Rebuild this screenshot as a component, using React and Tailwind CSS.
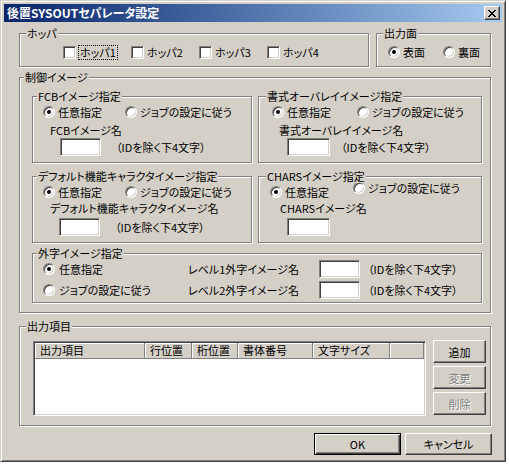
import React from 'react';

const face = "font-['Noto_Sans_CJK_JP','Noto_Sans',sans-serif] [font-feature-settings:'palt']";

// etched group box with the caption sitting on the top line
function Group({ label, labelLeft = 'left-[5px]', className = '', children }) {
    return (
        <div className={`relative border border-[#808080] shadow-[inset_1px_1px_0_#fff,1px_1px_0_#fff] ${className}`}>
            <span className={`absolute -top-[8px] ${labelLeft} bg-[#d4d0c8] px-[1px] leading-[14px]`}>{label}</span>
            {children}
        </div>
    );
}

function Sunken({ className = '', children }) {
    return (
        <div
            className={`border border-t-[#808080] border-l-[#808080] border-r-white border-b-white bg-white shadow-[inset_1px_1px_0_#404040,inset_-1px_-1px_0_#d4d0c8] ${className}`}
        >
            {children}
        </div>
    );
}

function Check() {
    return (
        <span className="block w-[13px] h-[13px] shrink-0 border border-t-[#808080] border-l-[#808080] border-r-white border-b-white bg-white shadow-[inset_1px_1px_0_#404040,inset_-1px_-1px_0_#d4d0c8]" />
    );
}

function Radio({ checked }) {
    return (
        <span className="flex w-[12px] h-[12px] shrink-0 items-center justify-center rounded-full border border-t-[#808080] border-l-[#808080] border-r-white border-b-white bg-white shadow-[inset_1px_1px_0_#404040,inset_-1px_-1px_0_#d4d0c8]">
            {checked && <span className="block w-[4px] h-[4px] rounded-full bg-black" />}
        </span>
    );
}

function Opt({ checked, className = '', children }) {
    return (
        <div className={`flex h-[14px] items-center ${className}`}>
            <Radio checked={checked} />
            <span className="ml-[3px] whitespace-nowrap leading-[14px]">{children}</span>
        </div>
    );
}

function Button({ children, disabled, isDefault, className = '' }) {
    const frame = isDefault
        ? 'border border-black shadow-[inset_1px_1px_0_#fff,inset_-1px_-1px_0_#404040,inset_-2px_-2px_0_#808080]'
        : 'border border-t-white border-l-white border-r-[#404040] border-b-[#404040] shadow-[inset_-1px_-1px_0_#808080]';
    return (
        <div
            className={`flex items-center justify-center bg-[#d4d0c8] leading-[14px] ${frame} ${
                disabled ? 'text-[#808080] [text-shadow:1px_1px_0_#fff]' : 'text-black'
            } ${className}`}
        >
            {children}
        </div>
    );
}

function CloseGlyph() {
    const px = [
        [0, 0], [1, 0], [6, 0], [7, 0],
        [1, 1], [2, 1], [5, 1], [6, 1],
        [2, 2], [3, 2], [4, 2], [5, 2],
        [3, 3], [4, 3],
        [2, 4], [3, 4], [4, 4], [5, 4],
        [1, 5], [2, 5], [5, 5], [6, 5],
        [0, 6], [1, 6], [6, 6], [7, 6],
    ];
    return (
        <svg width="8" height="7" viewBox="0 0 8 7" shapeRendering="crispEdges">
            {px.map(([x, y]) => (
                <rect key={`${x}-${y}`} x={x} y={y} width="1" height="1" fill="#000" />
            ))}
        </svg>
    );
}

const columns = [
    { label: '出力項目', w: 'w-[110px]' },
    { label: '行位置', w: 'w-[47px]' },
    { label: '桁位置', w: 'w-[46px]' },
    { label: '書体番号', w: 'w-[75px]' },
    { label: '文字サイズ', w: 'w-[77px]' },
    { label: '', w: 'flex-1' },
];

export default function App() {
    return (
        <div className={`min-h-screen bg-white text-[11px] text-black ${face}`}>
            <div className="w-[506px] h-[462px] bg-[#d4d0c8] border border-t-[#d4d0c8] border-l-[#d4d0c8] border-r-[#404040] border-b-[#404040] shadow-[inset_1px_1px_0_#fff,inset_-1px_-1px_0_#808080] p-[3px]">
                {/* title bar */}
                <div className="flex h-[18px] items-center justify-between bg-linear-to-r from-[#0a246a] to-[#a6caf0] pl-[3px] pr-[2px]">
                    <span className="text-[12px] font-bold text-white leading-[14px]">後置SYSOUTセパレータ設定</span>
                    <span className="flex w-[16px] h-[14px] items-center justify-center bg-[#d4d0c8] border border-t-white border-l-white border-r-[#404040] border-b-[#404040] shadow-[inset_-1px_-1px_0_#808080]">
                        <CloseGlyph />
                    </span>
                </div>

                <div className="pl-[15px]">
                    {/* hopper / output side */}
                    <div className="mt-[11px] flex gap-[7px]">
                        <Group label="ホッパ" labelLeft="left-[6px]" className="w-[350px] h-[34px]">
                            <div className="mt-[11px] flex h-[14px] items-center pl-[43px]">
                                <div className="flex w-[68px] items-center">
                                    <Check />
                                    <span className="ml-[2px] border border-dotted border-black px-[1px] leading-[13px]">ホッパ1</span>
                                </div>
                                {['ホッパ2', 'ホッパ3', 'ホッパ4'].map((t) => (
                                    <div key={t} className="flex w-[68px] items-center">
                                        <Check />
                                        <span className="ml-[3px] leading-[14px]">{t}</span>
                                    </div>
                                ))}
                            </div>
                        </Group>
                        <Group label="出力面" labelLeft="left-[6px]" className="w-[115px] h-[34px]">
                            <div className="mt-[11px] flex pl-[11px]">
                                <Opt checked className="w-[55px]">表面</Opt>
                                <Opt>裏面</Opt>
                            </div>
                        </Group>
                    </div>

                    {/* control images */}
                    <Group label="制御イメージ" labelLeft="left-[4px]" className="mt-[10px] w-[472px] h-[236px]">
                        <div className="pt-[18px] pl-[12px]">
                            <div className="flex gap-[6px]">
                                <Group label="FCBイメージ指定" labelLeft="left-[4px]" className="w-[220px] h-[67px]">
                                    <div className="mt-[8px] flex pl-[10px]">
                                        <Opt checked className="w-[82px]">任意指定</Opt>
                                        <Opt>ジョブの設定に従う</Opt>
                                    </div>
                                    <div className="mt-[4px] pl-[17px] leading-[14px]">FCBイメージ名</div>
                                    <div className="mt-[1px] flex items-center pl-[27px]">
                                        <Sunken className="w-[41px] h-[18px]" />
                                        <span className="ml-[15px] leading-[14px]">（IDを除く下4文字）</span>
                                    </div>
                                </Group>
                                <Group label="書式オーバレイイメージ指定" labelLeft="left-[7px]" className="w-[224px] h-[67px]">
                                    <div className="mt-[8px] flex pl-[13px]">
                                        <Opt checked className="w-[85px]">任意指定</Opt>
                                        <Opt>ジョブの設定に従う</Opt>
                                    </div>
                                    <div className="mt-[4px] pl-[20px] leading-[14px]">書式オーバレイイメージ名</div>
                                    <div className="mt-[1px] flex items-center pl-[28px]">
                                        <Sunken className="w-[43px] h-[18px]" />
                                        <span className="ml-[11px] leading-[14px]">（IDを除く下4文字）</span>
                                    </div>
                                </Group>
                            </div>

                            <div className="mt-[13px] flex gap-[6px]">
                                <Group label="デフォルト機能キャラクタイメージ指定" labelLeft="left-[4px]" className="w-[220px] h-[67px]">
                                    <div className="mt-[8px] flex pl-[10px]">
                                        <Opt checked className="w-[82px]">任意指定</Opt>
                                        <Opt>ジョブの設定に従う</Opt>
                                    </div>
                                    <div className="mt-[2px] pl-[17px] leading-[14px]">デフォルト機能キャラクタイメージ名</div>
                                    <div className="mt-[3px] flex items-center pl-[26px]">
                                        <Sunken className="w-[41px] h-[18px]" />
                                        <span className="ml-[15px] leading-[14px]">（IDを除く下4文字）</span>
                                    </div>
                                </Group>
                                <Group label="CHARSイメージ指定" labelLeft="left-[7px]" className="w-[224px] h-[67px]">
                                    <div className="mt-[8px] flex items-start pl-[11px]">
                                        <Opt checked className="w-[83px]">任意指定</Opt>
                                        <Opt className="-mt-[4px]">ジョブの設定に従う</Opt>
                                    </div>
                                    <div className="mt-[2px] pl-[21px] leading-[14px]">CHARSイメージ名</div>
                                    <div className="mt-[3px] pl-[28px]">
                                        <Sunken className="w-[43px] h-[18px]" />
                                    </div>
                                </Group>
                            </div>

                            <Group label="外字イメージ指定" labelLeft="left-[4px]" className="mt-[10px] w-[450px] h-[50px]">
                                <div className="mt-[6px] flex flex-col gap-[3px] pl-[10px]">
                                    {[
                                        { opt: '任意指定', checked: true, label: 'レベル1外字イメージ名' },
                                        { opt: 'ジョブの設定に従う', checked: false, label: 'レベル2外字イメージ名' },
                                    ].map((r) => (
                                        <div key={r.label} className="flex h-[18px] items-center">
                                            <Opt checked={r.checked} className="w-[145px]">
                                                <span className="ml-[1px]">{r.opt}</span>
                                            </Opt>
                                            <span className="w-[131px] leading-[14px]">{r.label}</span>
                                            <Sunken className="w-[41px] h-[18px]" />
                                            <span className="ml-[8px] leading-[14px]">（IDを除く下4文字）</span>
                                        </div>
                                    ))}
                                </div>
                            </Group>
                        </div>
                    </Group>

                    {/* output items */}
                    <Group label="出力項目" labelLeft="left-[6px]" className="mt-[13px] w-[472px] h-[100px]">
                        <div className="flex items-start pt-[13px] pl-[13px]">
                            <Sunken className="mt-[1px] w-[393px] h-[75px] p-[1px]">
                                <div className="flex h-[16px]">
                                    {columns.map((c, i) => (
                                        <div
                                            key={i}
                                            className={`${c.w} bg-[#d4d0c8] border-r border-b border-[#808080] shadow-[inset_1px_1px_0_#fff] pl-[5px] leading-[15px] whitespace-nowrap overflow-hidden`}
                                        >
                                            {c.label}
                                        </div>
                                    ))}
                                </div>
                            </Sunken>
                            <div className="ml-[7px] flex flex-col gap-[3px]">
                                <Button className="w-[53px] h-[23px]">追加</Button>
                                <Button disabled className="w-[53px] h-[23px]">変更</Button>
                                <Button disabled className="w-[53px] h-[23px]">削除</Button>
                            </div>
                        </div>
                    </Group>

                    <div className="mt-[7px] flex w-[473px] justify-end gap-[4px]">
                        <Button isDefault className="w-[87px] h-[22px]">OK</Button>
                        <Button className="w-[87px] h-[22px]">キャンセル</Button>
                    </div>
                </div>
            </div>
        </div>
    );
}
